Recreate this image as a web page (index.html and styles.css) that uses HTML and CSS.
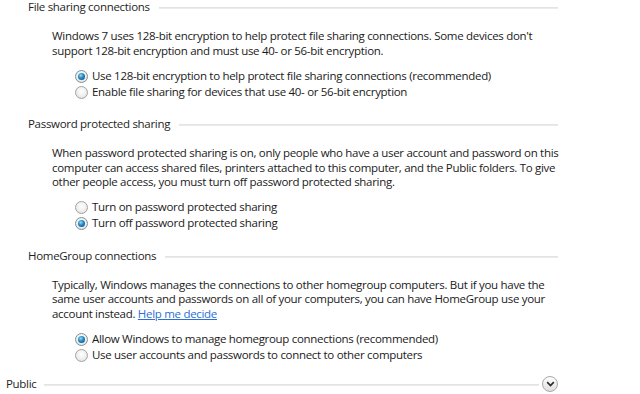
FILE: index.html
```html
<!DOCTYPE html>
<html>
<head>
<meta charset="utf-8">
<link rel="stylesheet" href="styles.css">
</head>
<body>
<div class="page">
  <section class="group">
    <div class="heading"><span class="title">File sharing connections</span><span class="rule"></span></div>
    <p class="desc">Windows 7 uses 128-bit encryption to help protect file sharing connections. Some devices don't<br>support 128-bit encryption and must use 40- or 56-bit encryption.</p>
    <div class="options">
      <label class="opt"><span class="radio checked"></span>Use 128-bit encryption to help protect file sharing connections (recommended)</label>
      <label class="opt"><span class="radio"></span>Enable file sharing for devices that use 40- or 56-bit encryption</label>
    </div>
  </section>
  <section class="group">
    <div class="heading"><span class="title">Password protected sharing</span><span class="rule"></span></div>
    <p class="desc">When password protected sharing is on, only people who have a user account and password on this<br>computer can access shared files, printers attached to this computer, and the Public folders. To give<br>other people access, you must turn off password protected sharing.</p>
    <div class="options">
      <label class="opt"><span class="radio"></span>Turn on password protected sharing</label>
      <label class="opt"><span class="radio checked"></span>Turn off password protected sharing</label>
    </div>
  </section>
  <section class="group last">
    <div class="heading"><span class="title">HomeGroup connections</span><span class="rule"></span></div>
    <p class="desc">Typically, Windows manages the connections to other homegroup computers. But if you have the<br>same user accounts and passwords on all of your computers, you can have HomeGroup use your<br>account instead. <a class="link" href="#">Help me decide</a></p>
    <div class="options">
      <label class="opt"><span class="radio checked"></span>Allow Windows to manage homegroup connections (recommended)</label>
      <label class="opt"><span class="radio"></span>Use user accounts and passwords to connect to other computers</label>
    </div>
  </section>
  <div class="public">
    <span class="title">Public</span><span class="rule"></span>
    <span class="expand"><svg width="9" height="6" viewBox="0 0 9 6"><path d="M1.2 1.2 L4.5 4.5 L7.8 1.2" fill="none" stroke="#2b2b2b" stroke-width="1.7"/></svg></span>
  </div>
</div>
</body>
</html>
```
FILE: styles.css
```css
html, body {
  margin: 0;
  padding: 0;
  background: #ffffff;
}
body {
  font-family: "Open Sans", "Noto Sans", sans-serif;
  font-size: 11.5px;
  letter-spacing: -0.3px;
  line-height: 14.5px;
  color: #1a1a1a;
  width: 640px;
  height: 394px;
  overflow: hidden;
}
.page {
  display: flex;
  flex-direction: column;
}
.group {
  display: flex;
  flex-direction: column;
  margin-bottom: 17px;
}
.group.last {
  margin-bottom: 13px;
}
.heading {
  display: flex;
  align-items: center;
  padding-left: 28px;
  width: 530px;
  height: 15px;
}
.title {
  color: #1e1e1e;
  white-space: nowrap;
}
.rule {
  flex: 1;
  height: 2px;
  background: linear-gradient(#e0e0e0, #eeeeee);
  margin-left: 9px;
  margin-top: 1px;
}
.desc {
  margin: 14px 0 0 52px;
  white-space: nowrap;
}
.link {
  color: #2a6fd6;
  text-decoration: underline;
}
.options {
  display: flex;
  flex-direction: column;
  margin: 10px 0 0 75px;
}
.opt {
  display: flex;
  align-items: center;
  height: 16px;
  white-space: nowrap;
}
.radio {
  box-sizing: border-box;
  width: 13px;
  height: 13px;
  border-radius: 50%;
  border: 1px solid #a3a3a3;
  background: radial-gradient(circle at 50% 40%, #ffffff 0%, #eeeeee 55%, #d6d6d6 100%);
  margin-right: 4px;
  display: flex;
  align-items: center;
  justify-content: center;
  flex: none;
}
.radio.checked {
  border-color: #80909c;
}
.radio.checked::after {
  content: "";
  width: 7px;
  height: 7px;
  border-radius: 50%;
  background: radial-gradient(circle at 40% 35%, #8fe1ff 0%, #2a8ec4 40%, #0b3f6c 100%);
}
.public {
  display: flex;
  align-items: center;
  padding-left: 6px;
  width: 552px;
  height: 16px;
}
.public .rule {
  margin-left: 7px;
  margin-right: 3px;
}
.expand {
  box-sizing: border-box;
  width: 16px;
  height: 16px;
  border-radius: 50%;
  border: 1px solid #a8a8a8;
  background: linear-gradient(#fdfdfd, #e0e0e0);
  display: flex;
  align-items: center;
  justify-content: center;
  flex: none;
}
```
